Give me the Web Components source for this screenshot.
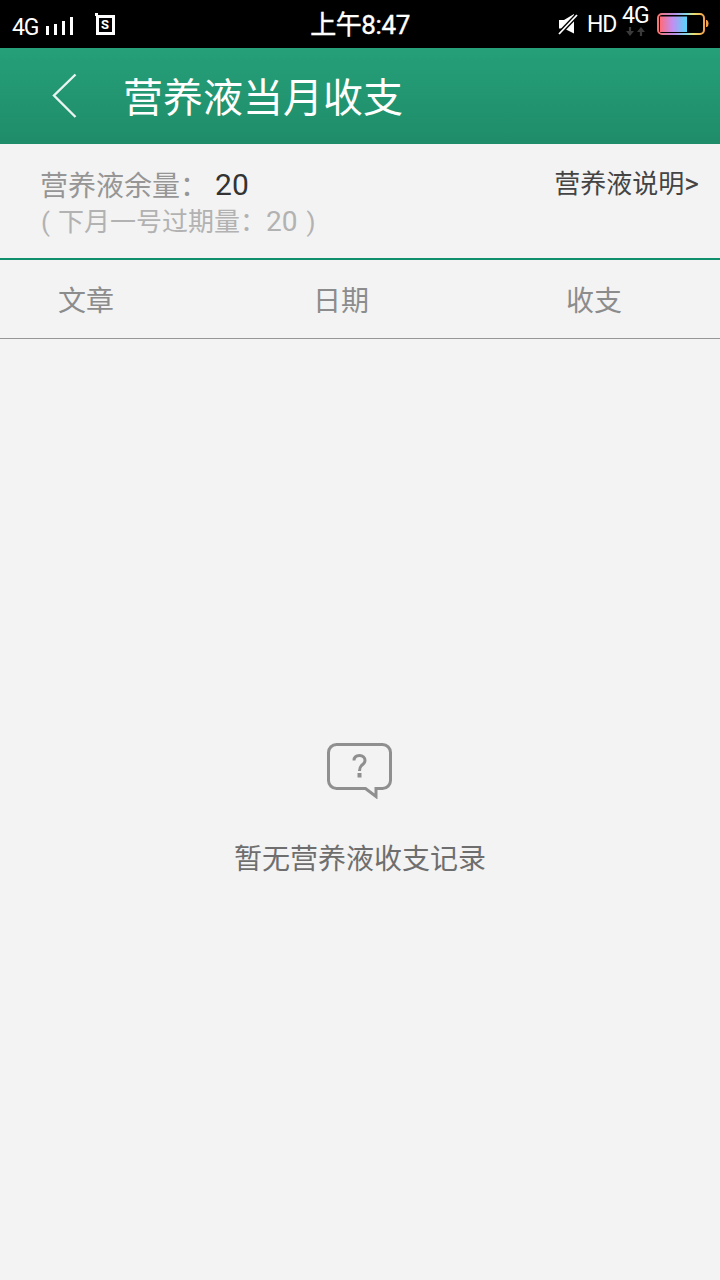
<!DOCTYPE html>
<html lang="zh">
<head>
<meta charset="utf-8">
<style>
    html, body { margin: 0; padding: 0; background: #f3f3f3; }
    body { width: 720px; height: 1280px; overflow: hidden; display: flex; flex-direction: column; font-family: Roboto, "Noto Sans CJK SC", sans-serif; }
</style>
</head>
<body>
<status-bar></status-bar>
<app-bar>营养液当月收支</app-bar>
<balance-summary amount="20" expiring="20"></balance-summary>
<ledger-head></ledger-head>
<empty-state>暂无营养液收支记录</empty-state>

<script>
(function() {
    'use strict';

    const FONT = 'Roboto, "Noto Sans CJK SC", sans-serif';

    class StatusBar extends HTMLElement {
        connectedCallback() {
            this.attachShadow({ mode: 'open' }).innerHTML = `
                <style>
                    :host { display: flex; flex: none; height: 48px; background: #000; color: #fff; position: relative; font-family: ${FONT}; }
                    .left, .right { position: absolute; top: 0; height: 48px; display: block; }
                    .left { left: 0; width: 130px; }
                    .right { left: 540px; width: 180px; }
                    .t { position: absolute; line-height: 1; white-space: nowrap; }
                    .clock { position: absolute; left: 0; right: 0; top: 9px; text-align: center; font-size: 26px; line-height: 32px; letter-spacing: -0.4px; -webkit-text-stroke: 0.4px #fff; }
                    svg { position: absolute; left: 0; top: 0; }
                </style>
                <div class="left">
                    <span class="t" style="left:12px;top:16px;font-size:23px;letter-spacing:-1.2px">4G</span>
                    <svg width="130" height="48" viewBox="0 0 130 48" fill="#fff">
                        <rect x="46" y="26" width="3" height="9"/>
                        <rect x="54" y="24" width="3" height="11"/>
                        <rect x="62" y="21" width="3" height="14"/>
                        <rect x="70" y="17" width="3" height="18"/>
                        <path d="M95 13h3v3h-3z"/>
                        <rect x="97.500" y="16.500" width="16" height="17" fill="none" stroke="#fff" stroke-width="3"/>
                    </svg>
                    <span class="t" style="left:101px;top:18px;font-size:13px;font-weight:700">S</span>
                </div>
                <div class="clock">上午8:47</div>
                <div class="right">
                    <svg width="180" height="48" viewBox="0 0 180 48">
                        <path d="M19 20h5l10-6v19.500l-10-5h-5z" fill="#fff"/>
                        <path d="M19 34L37 15" stroke="#000" stroke-width="4.500"/>
                        <path d="M19 34L37 15" stroke="#fff" stroke-width="1.800"/>
                        <path d="M90 27v5M101 36v-5" fill="none" stroke="#3a3a3a" stroke-width="2.200"/>
                        <path d="M86 31h8l-4 5zM97 32h8l-4-5z" fill="#3a3a3a"/>
                        <defs>
                            <linearGradient id="fill" x1="0" x2="1" y1="0" y2="0">
                                <stop offset="0" stop-color="#ff6b78"/>
                                <stop offset=".45" stop-color="#c58cf0"/>
                                <stop offset="1" stop-color="#55d6fb"/>
                            </linearGradient>
                            <linearGradient id="rim" x1="0" x2="1" y1="0" y2="0">
                                <stop offset="0" stop-color="#f8736f"/>
                                <stop offset=".35" stop-color="#b98be8"/>
                                <stop offset=".6" stop-color="#7fd8ee"/>
                                <stop offset=".78" stop-color="#e8e070"/>
                                <stop offset="1" stop-color="#f5a24e"/>
                            </linearGradient>
                        </defs>
                        <rect x="118" y="14" width="46" height="20" rx="4" fill="none" stroke="url(#rim)" stroke-width="2"/>
                        <rect x="120" y="16.500" width="27" height="15.500" fill="url(#fill)"/>
                        <path d="M166 20h1q1.500 1 1.500 3.500t-1.500 3.500h-1z" fill="#f5a24e"/>
                    </svg>
                    <span class="t" style="left:47px;top:13px;font-size:23px;letter-spacing:-1.200px">HD</span>
                    <span class="t" style="left:82px;top:4px;font-size:23px;letter-spacing:-1px">4G</span>
                </div>
            `;
        }
    }

    class AppBar extends HTMLElement {
        connectedCallback() {
            this.attachShadow({ mode: 'open' }).innerHTML = `
                <style>
                    :host { display: flex; flex: none; align-items: center; height: 96px; background: linear-gradient(#25a079, #1f8c69); color: #fff; font-family: ${FONT}; }
                    svg { flex: none; margin-left: 52px; width: 26px; height: 46px; }
                    .title { margin: 6px 0 0 45px; font-size: 40px; line-height: 48px; }
                </style>
                <svg viewBox="0 0 26 46" fill="none" stroke="#fff" stroke-width="2.400" opacity=".9"><path d="M23.500 1.500L2 22.500l21.500 21.500"/></svg>
                <div class="title"><slot></slot></div>
            `;
        }
    }

    class BalanceSummary extends HTMLElement {
        connectedCallback() {
            const amount = this.getAttribute('amount');
            const expiring = this.getAttribute('expiring');
            this.attachShadow({ mode: 'open' }).innerHTML = `
                <style>
                    :host { display: flex; flex: none; justify-content: space-between; height: 114px; box-sizing: content-box; border-bottom: 2px solid #0f8f6c; font-family: ${FONT}; }
                    .info { padding: 19px 0 0 40px; }
                    .line1 { display: flex; align-items: center; height: 42px; font-size: 28px; color: #969696; }
                    .line1 b { font-weight: 400; font-size: 30px; color: #333; margin-left: 7px; }
                    .line2 { display: flex; font-size: 26px; line-height: 34px; color: #b2b2b2; white-space: nowrap; }
                    .line2 .open { margin-left: 1px; }
                    .line2 .txt { margin-left: 8px; }
                    .line2 .num { font-size: 28px; }
                    .line2 .end { margin-left: 9px; }
                    .link { padding: 20px 21px 0 0; font-size: 26px; line-height: 40px; color: #444; white-space: nowrap; }
                    .link span { font-size: 28px; }
                </style>
                <div class="info">
                    <div class="line1">营养液余量：<b>${amount}</b></div>
                    <div class="line2"><span class="open">(</span><span class="txt">下月一号过期量：</span><span class="num">${expiring}</span><span class="end">)</span></div>
                </div>
                <div class="link">营养液说明<span>&gt;</span></div>
            `;
        }
    }

    class LedgerHead extends HTMLElement {
        connectedCallback() {
            this.attachShadow({ mode: 'open' }).innerHTML = `
                <style>
                    :host { display: flex; flex: none; height: 78px; align-items: center; border-bottom: 1px solid #969696; color: #8c8c8c; font-size: 28px; font-family: ${FONT}; }
                    span { white-space: nowrap; }
                    .a { margin-left: 58px; }
                    .b { margin-left: 199px; }
                    .c { margin-left: 197px; }
                </style>
                <span class="a">文章</span><span class="b">日期</span><span class="c">收支</span>
            `;
        }
    }

    class EmptyState extends HTMLElement {
        connectedCallback() {
            this.attachShadow({ mode: 'open' }).innerHTML = `
                <style>
                    :host { display: flex; flex-direction: column; align-items: center; padding-top: 404px; color: #6e6e6e; font-size: 28px; font-family: ${FONT}; }
                    svg { width: 66px; height: 56px; display: block; }
                    .msg { margin-top: 41px; line-height: 40px; }
                </style>
                <svg viewBox="0 0 66 56" fill="none">
                    <path d="M9.500 1.500h46a8 8 0 0 1 8 8v28a8 8 0 0 1-8 8h-6.500v8l-10.500-8H9.500a8 8 0 0 1-8-8v-28a8 8 0 0 1 8-8z" stroke="#8f8f8f" stroke-width="3"/>
                    <path d="M27 17.500c0-3.500 2.300-5 5.500-5s5.500 1.800 5.500 5c0 3-2.300 3.800-3.700 5.200s-1.800 2.300-1.800 5.300" stroke="#8f8f8f" stroke-width="3"/>
                    <rect x="30.500" y="30" width="4" height="4.500" fill="#8f8f8f"/>
                </svg>
                <div class="msg"><slot></slot></div>
            `;
        }
    }

    customElements.define('status-bar', StatusBar);
    customElements.define('app-bar', AppBar);
    customElements.define('balance-summary', BalanceSummary);
    customElements.define('ledger-head', LedgerHead);
    customElements.define('empty-state', EmptyState);
})();
</script>
</body>
</html>
